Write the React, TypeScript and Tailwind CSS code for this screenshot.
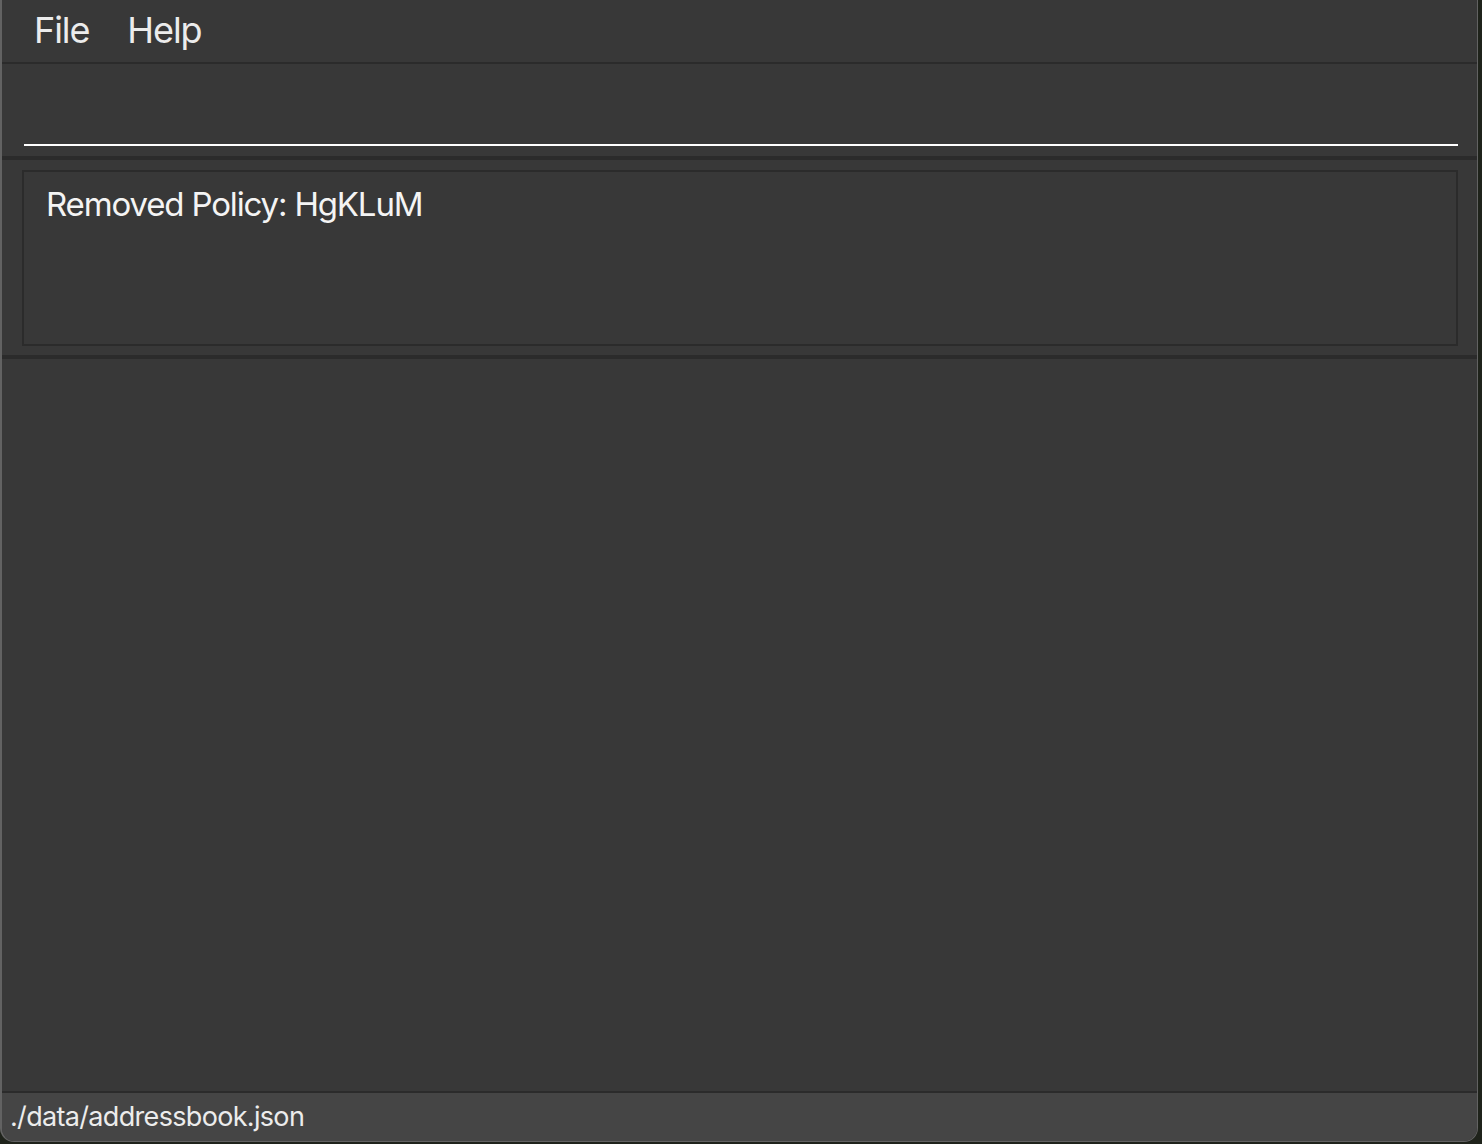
const App = () => {
  return (
    <div className="w-[1482px] h-[1144px] bg-[#1f231b] flex" style={{ fontFamily: 'Inter, "Noto Sans", sans-serif' }}>
      <div className="w-[1478px] h-[1142px] flex flex-col bg-[#383838] border-l-2 border-r border-b border-[#626262] rounded-b-[14px] overflow-hidden">
        {/* menu bar */}
        <div className="h-[62px] flex items-center gap-[38px] pl-[32px] pb-[3px] text-[36px] tracking-[-0.03em] text-[#ececec]">
          <span>File</span>
          <span>Help</span>
        </div>
        <div className="h-[2px] bg-[#2b2b2b]" />

        {/* command box */}
        <div className="h-[92px] flex flex-col justify-end pb-[10px] pl-[22px] pr-[19px]">
          <div className="h-[2px] bg-white" />
        </div>
        <div className="h-[4px] bg-[#2b2b2b]" />

        {/* result display */}
        <div className="h-[195px] pt-[10px] pl-[20px] pr-[19px]">
          <div className="h-[176px] border-2 border-[#2b2b2b] pl-[22px] pt-[16px] text-[33px] leading-none tracking-[-0.035em] text-[#f4f4f4]">
            Removed Policy: HgKLuM
          </div>
        </div>
        <div className="h-[4px] bg-[#2b2b2b]" />

        {/* list area */}
        <div className="flex-1" />

        {/* status bar */}
        <div className="h-[2px] bg-[#2b2b2b]" />
        <div className="h-[48px] bg-[#454545] flex items-center pl-[8px] text-[27px] tracking-[-0.025em] text-[#ececec]">
          ./data/addressbook.json
        </div>
      </div>
    </div>
  );
};

export default App;
